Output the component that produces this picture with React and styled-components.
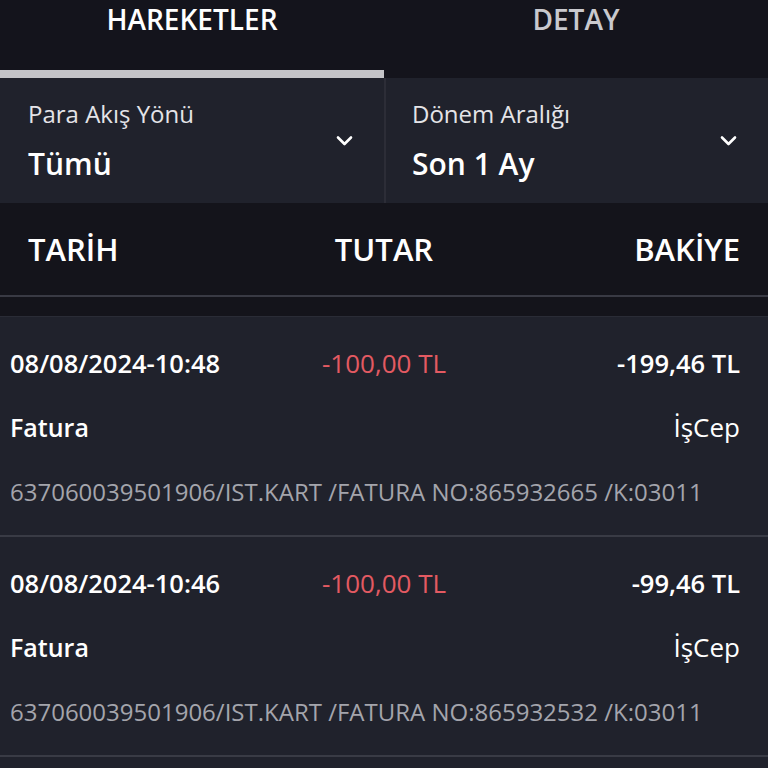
import React from "react";
import styled, { createGlobalStyle } from "styled-components";

const GlobalStyle = createGlobalStyle`
  html, body {
    margin: 0;
    padding: 0;
    background: #20222c;
  }
  body {
    font-family: "Open Sans", "Noto Sans", sans-serif;
    color: #ffffff;
  }
`;

const transactions = [
  {
    id: 1,
    date: "08/08/2024-10:48",
    amount: "-100,00 TL",
    balance: "-199,46 TL",
    type: "Fatura",
    channel: "İşCep",
    desc: "637060039501906/IST.KART /FATURA NO:865932665 /K:03011",
  },
  {
    id: 2,
    date: "08/08/2024-10:46",
    amount: "-100,00 TL",
    balance: "-99,46 TL",
    type: "Fatura",
    channel: "İşCep",
    desc: "637060039501906/IST.KART /FATURA NO:865932532 /K:03011",
  },
  {
    id: 3,
    date: "",
    amount: "",
    balance: "",
    type: "",
    channel: "",
    desc: "",
  },
];

const Chevron = () => (
  <svg width="17" height="12" viewBox="0 0 17 12" fill="none">
    <path
      d="M2 2.5 L8.5 9 L15 2.5"
      stroke="#ffffff"
      strokeWidth="2.6"
      strokeLinecap="round"
      strokeLinejoin="round"
    />
  </svg>
);

const App = () => {
  return (
    <Page>
      <GlobalStyle />
      <TabBar>
        <Tab active>HAREKETLER</Tab>
        <Tab>DETAY</Tab>
      </TabBar>

      <Filters>
        <Filter>
          <FilterText>
            <FilterLabel>Para Akış Yönü</FilterLabel>
            <FilterValue>Tümü</FilterValue>
          </FilterText>
          <Chevron />
        </Filter>
        <Filter divided>
          <FilterText>
            <FilterLabel>Dönem Aralığı</FilterLabel>
            <FilterValue>Son 1 Ay</FilterValue>
          </FilterText>
          <Chevron />
        </Filter>
      </Filters>

      <Header>
        <HeadCell>TARİH</HeadCell>
        <HeadCell align="center">TUTAR</HeadCell>
        <HeadCell align="right">BAKİYE</HeadCell>
      </Header>
      <Spacer />

      <List>
        {transactions.map((t) => (
          <Row key={t.id}>
            <MainLine>
              <DateText>{t.date}</DateText>
              <Amount>{t.amount}</Amount>
              <Balance>{t.balance}</Balance>
            </MainLine>
            <SubLine>
              <TypeText>{t.type}</TypeText>
              <Channel>{t.channel}</Channel>
            </SubLine>
            <Desc>{t.desc}</Desc>
          </Row>
        ))}
      </List>
    </Page>
  );
};

const Page = styled.div`
  width: 768px;
  height: 768px;
  overflow: hidden;
  background: #20222c;
`;

const TabBar = styled.div`
  display: grid;
  grid-template-columns: 1fr 1fr;
  background: #14141c;
`;

const Tab = styled.div`
  height: 70px;
  line-height: 38px;
  text-align: center;
  font-size: 28px;
  font-weight: 600;
  color: ${(p) => (p.active ? "#ffffff" : "#c9c9ce")};
  border-bottom: 8px solid ${(p) => (p.active ? "#c4c4c8" : "transparent")};
`;

const Filters = styled.div`
  display: grid;
  grid-template-columns: 1fr 1fr;
  background: #20222c;
`;

const Filter = styled.div`
  display: flex;
  align-items: center;
  justify-content: space-between;
  height: 125px;
  box-sizing: border-box;
  padding: 0 31px 0 28px;
  border-left: ${(p) => (p.divided ? "2px solid #2c2d37" : "none")};
  padding-left: ${(p) => (p.divided ? "26px" : "28px")};
`;

const FilterText = styled.div`
  display: flex;
  flex-direction: column;
`;

const FilterLabel = styled.div`
  font-size: 24px;
  line-height: 34px;
  color: #e4e4e8;
`;

const FilterValue = styled.div`
  margin-top: 13px;
  font-size: 30px;
  line-height: 40px;
  font-weight: 600;
  color: #ffffff;
`;

const Header = styled.div`
  display: grid;
  grid-template-columns: 1fr auto 1fr;
  align-items: center;
  height: 92px;
  padding: 0 28px;
  background: #14141b;
  border-bottom: 2px solid #393a44;
`;

const HeadCell = styled.div`
  font-size: 31px;
  font-weight: 600;
  color: #ffffff;
  text-align: ${(p) => p.align || "left"};
`;

const Spacer = styled.div`
  height: 19px;
  background: #14141b;
`;

const List = styled.div`
  display: flex;
  flex-direction: column;
`;

const Row = styled.div`
  display: grid;
  grid-template-rows: 64px 64px 64px;
  padding: 14px 28px 12px 10px;
  background: #20222c;
  border-bottom: 2px solid #393b45;
  &:first-child {
    border-top: 1px solid #2a2c36;
    padding-top: 14px;
  }
`;

const MainLine = styled.div`
  display: grid;
  grid-template-columns: 1fr auto 1fr;
  align-items: center;
`;

const DateText = styled.div`
  font-size: 25.5px;
  font-weight: 600;
  color: #ffffff;
`;

const Amount = styled.div`
  margin-left: 18px;
  font-size: 26px;
  font-weight: 400;
  color: #e35a62;
`;

const Balance = styled.div`
  text-align: right;
  font-size: 25.5px;
  font-weight: 600;
  color: #ffffff;
`;

const SubLine = styled.div`
  display: flex;
  align-items: center;
  justify-content: space-between;
`;

const TypeText = styled.div`
  font-size: 25px;
  font-weight: 600;
  color: #ffffff;
`;

const Channel = styled.div`
  font-size: 26px;
  font-weight: 400;
  color: #ffffff;
`;

const Desc = styled.div`
  display: flex;
  align-items: center;
  font-size: 24px;
  color: #a4a5ac;
  white-space: nowrap;
`;

export default App;
